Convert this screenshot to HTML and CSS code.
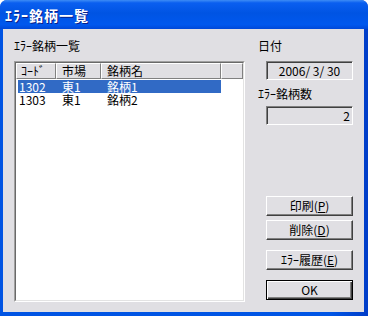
FILE: index.html
```html
<!DOCTYPE html>
<html lang="ja">
<head>
    <meta charset="UTF-8">
    <title>ｴﾗｰ銘柄一覧</title>
    <link rel="stylesheet" href="styles.css">
</head>
<body>
    <div class="window">
        <div class="titlebar">ｴﾗｰ銘柄一覧</div>
        <div class="client">
            <div class="left">
                <div class="label">ｴﾗｰ銘柄一覧</div>
                <div class="listview">
                    <div class="lv-inner">
                        <div class="lv-header">
                            <div class="hd c1">ｺｰﾄﾞ</div>
                            <div class="hd c2">市場</div>
                            <div class="hd c3">銘柄名</div>
                            <div class="hd filler"></div>
                        </div>
                        <div class="lv-row selected">
                            <span class="c1">1302</span><span class="c2">東1</span><span class="c3">銘柄1</span>
                        </div>
                        <div class="lv-row">
                            <span class="c1">1303</span><span class="c2">東1</span><span class="c3">銘柄2</span>
                        </div>
                    </div>
                </div>
            </div>
            <div class="right">
                <div class="label">日付</div>
                <div class="field field-date">2006/ 3/ 30</div>
                <div class="label label-count">ｴﾗｰ銘柄数</div>
                <div class="field field-count">2</div>
                <div class="buttons">
                    <button class="btn">印刷(<u>P</u>)</button>
                    <button class="btn">削除(<u>D</u>)</button>
                    <button class="btn btn-gap">ｴﾗｰ履歴(<u>E</u>)</button>
                    <button class="btn btn-gap btn-default">OK</button>
                </div>
            </div>
        </div>
    </div>
</body>
</html>
```

FILE: styles.css
```css
body, html {
    margin: 0;
    padding: 0;
    background-color: white;
}
body {
    font-family: "Noto Sans CJK JP", "DejaVu Sans", sans-serif;
    font-size: 12px;
    color: black;
}
.window {
    width: 368px;
    height: 316px;
    box-sizing: border-box;
    display: flex;
    flex-direction: column;
    padding: 0 4px 4px 3px;
    background: linear-gradient(to right, #0054e3, #0055e5 90%, #003dc8);
    border-radius: 7px 7px 0 0;
    overflow: hidden;
}
.titlebar {
    height: 29px;
    margin: 0 -4px 0 -3px;
    padding-left: 5px;
    display: flex;
    align-items: center;
    color: white;
    font-weight: bold;
    font-size: 14px;
    letter-spacing: 1px;
    text-shadow: 1px 1px #0a1f8a;
    background: linear-gradient(#3d8cf5 0%, #0a5ff0 10%, #0054e3 45%, #0058ee 85%, #0048d8 100%);
}
.client {
    flex: 1;
    display: flex;
    padding: 10px 0 10px 11px;
    background-color: #e0dfe3;
}
.label {
    height: 14px;
    line-height: 14px;
    white-space: nowrap;
}
.left {
    width: 231px;
    display: flex;
    flex-direction: column;
}
.listview {
    margin-top: 8px;
    height: 241px;
    box-sizing: border-box;
    border: 1px solid;
    border-color: #a0a0a0 #ffffff #ffffff #a0a0a0;
}
.lv-inner {
    height: 100%;
    box-sizing: border-box;
    border: 1px solid;
    border-color: #696969 #e3e3e3 #e3e3e3 #696969;
    background-color: white;
    overflow: hidden;
}
.lv-header {
    display: flex;
    height: 16px;
}
.hd {
    box-sizing: border-box;
    height: 16px;
    line-height: 14px;
    background-color: #e0dfe3;
    border-top: 1px solid #ffffff;
    border-left: 1px solid #ffffff;
    border-right: 1px solid #808080;
    border-bottom: 1px solid #808080;
    white-space: nowrap;
}
.hd.c1 {
    width: 40px;
    padding-left: 4px;
}
.hd.c2 {
    width: 45px;
    padding-left: 5px;
}
.hd.c3 {
    width: 120px;
    padding-left: 5px;
}
.hd.filler {
    flex: 1;
}
.lv-row {
    display: flex;
    width: 203px;
    height: 13px;
    line-height: 13px;
    margin-left: 2px;
    white-space: nowrap;
}
.lv-header + .lv-row {
    margin-top: 1px;
}
.lv-row.selected {
    background-color: #316ac5;
    color: white;
}
.lv-row .c1 {
    width: 38px;
    padding-left: 1px;
    box-sizing: border-box;
}
.lv-row .c2 {
    width: 45px;
    padding-left: 6px;
    box-sizing: border-box;
}
.lv-row .c3 {
    width: 120px;
    padding-left: 6px;
    box-sizing: border-box;
}
.right {
    margin-left: 13px;
    flex: 1;
    display: flex;
    flex-direction: column;
    padding-bottom: 2px;
}
.field {
    margin-left: 8px;
    width: 87px;
    height: 19px;
    box-sizing: border-box;
    border: 1px solid;
    border-color: #808080 #ffffff #ffffff #808080;
    box-shadow: inset 1px 1px #404040;
    line-height: 17px;
    white-space: pre;
}
.field-date {
    margin-top: 8px;
    text-align: center;
}
.label-count {
    margin-top: 7px;
}
.field-count {
    margin-top: 5px;
    text-align: right;
    padding-right: 2px;
}
.buttons {
    margin-top: auto;
    display: flex;
    flex-direction: column;
    gap: 4px;
}
.btn {
    margin-left: 8px;
    width: 87px;
    height: 20px;
    padding: 0;
    box-sizing: border-box;
    font-family: "Noto Sans CJK JP", "DejaVu Sans", sans-serif;
    font-size: 12px;
    line-height: 16px;
    color: black;
    background-color: #e0dfe3;
    border: 1px solid;
    border-color: #ffffff #404040 #404040 #ffffff;
    box-shadow: inset -1px -1px #808080;
}
.btn-gap {
    margin-top: 6px;
}
.btn-default {
    border-color: #000000;
    box-shadow: inset 1px 1px #ffffff, inset -1px -1px #404040, inset -2px -2px #808080;
}
```
